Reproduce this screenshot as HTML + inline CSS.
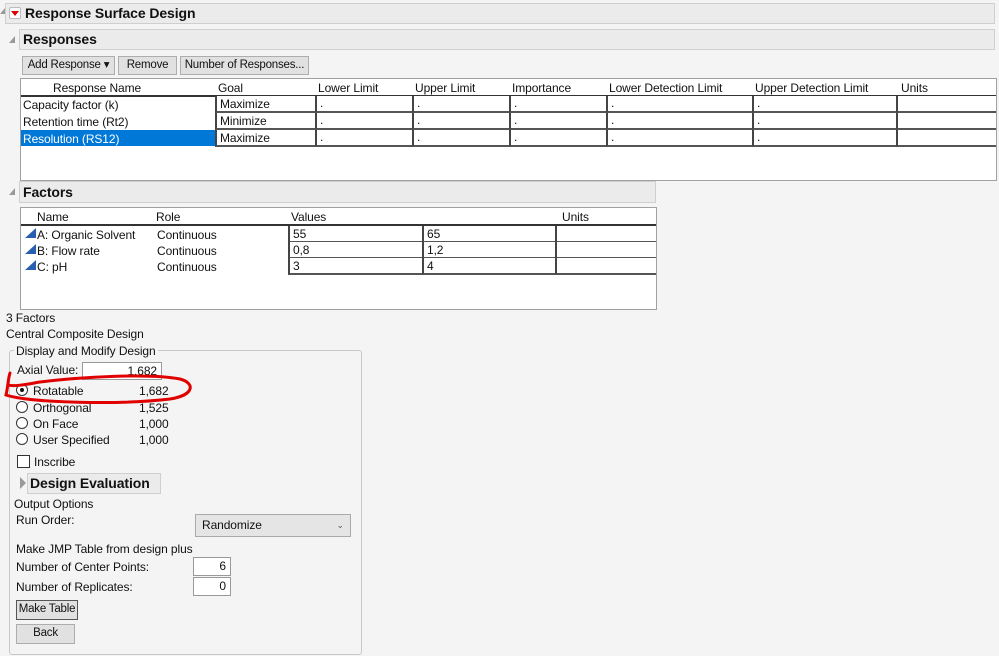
<!DOCTYPE html>
<html><head><meta charset="utf-8"><style>
*{box-sizing:border-box;margin:0;padding:0}
body{width:999px;height:656px;background:#f4f4f4;font-family:"Liberation Sans",sans-serif;font-size:12px;color:#111;position:relative;overflow:hidden;letter-spacing:-0.1px}
.a{position:absolute;white-space:nowrap}
.bar{position:absolute;background:#ebebeb;border:1px solid #cfcfcf}
.bt{font-weight:bold;font-size:14px}
.btn{position:absolute;background:#e1e1e1;border:1px solid #adadad;text-align:center;line-height:17px;white-space:nowrap;overflow:hidden;font-size:11.5px;letter-spacing:-0.2px}
.box{position:absolute;background:#fff;border:1px solid #a0a0a0}
.cell{position:absolute;background:#fff;border-left:2px solid #444;border-bottom:2px solid #555;line-height:14px;padding-left:3px}
.in{position:absolute;background:#fff;border:1px solid #999;text-align:right;padding-right:4px;line-height:16px}
.rad{position:absolute;width:12px;height:12px;border:1px solid #333;border-radius:50%;background:#fff}
.tri{position:absolute;width:0;height:0}
</style></head><body>
<div class="tri" style="left:0;top:8px;border-left:5px solid transparent;border-bottom:6px solid #999"></div>
<div class="bar" style="left:5px;top:3px;width:990px;height:21px"></div>
<div class="a" style="left:9px;top:7px;width:12px;height:12px;background:#fff;border:1px solid #bbb;border-radius:2px"></div>
<div class="tri" style="left:11px;top:11px;border-left:4px solid transparent;border-right:4px solid transparent;border-top:5px solid #d00"></div>
<div class="a bt" style="left:25px;top:5px">Response Surface Design</div>

<div class="tri" style="left:9px;top:36px;border-left:6px solid transparent;border-bottom:7px solid #999"></div>
<div class="bar" style="left:19px;top:29px;width:976px;height:21px"></div>
<div class="a bt" style="left:23px;top:31px">Responses</div>

<div class="btn" style="left:22px;top:56px;width:93px;height:19px">Add Response ▾</div>
<div class="btn" style="left:118px;top:56px;width:59px;height:19px">Remove</div>
<div class="btn" style="left:180px;top:56px;width:129px;height:19px">Number of Responses...</div>

<div class="box" style="left:20px;top:78px;width:977px;height:103px"></div>
<div class="a" style="left:53px;top:81px">Response Name</div>
<div class="a" style="left:218px;top:81px">Goal</div>
<div class="a" style="left:318px;top:81px">Lower Limit</div>
<div class="a" style="left:415px;top:81px">Upper Limit</div>
<div class="a" style="left:512px;top:81px">Importance</div>
<div class="a" style="left:609px;top:81px">Lower Detection Limit</div>
<div class="a" style="left:755px;top:81px">Upper Detection Limit</div>
<div class="a" style="left:901px;top:81px">Units</div>
<div class="a" style="left:21px;top:95px;width:975px;height:2px;background:#333"></div>
<div class="a" style="left:21px;top:130px;width:195px;height:16px;background:#0078d7"></div>
<div class="a" style="left:23px;top:98px">Capacity factor (k)</div>
<div class="a" style="left:23px;top:115px">Retention time (Rt2)</div>
<div class="a" style="left:23px;top:132px;color:#fff">Resolution (RS12)</div>
<div class="cell" style="left:215px;top:96px;width:100px;height:17px;padding-top:1px">Maximize</div>
<div class="cell" style="left:215px;top:113px;width:100px;height:17px;padding-top:1px">Minimize</div>
<div class="cell" style="left:215px;top:130px;width:100px;height:17px;padding-top:1px">Maximize</div>
<div class="cell" style="left:315px;top:96px;width:97px;height:17px">.</div>
<div class="cell" style="left:315px;top:113px;width:97px;height:17px">.</div>
<div class="cell" style="left:315px;top:130px;width:97px;height:17px">.</div>
<div class="cell" style="left:412px;top:96px;width:97px;height:17px">.</div>
<div class="cell" style="left:412px;top:113px;width:97px;height:17px">.</div>
<div class="cell" style="left:412px;top:130px;width:97px;height:17px">.</div>
<div class="cell" style="left:509px;top:96px;width:97px;height:17px">.</div>
<div class="cell" style="left:509px;top:113px;width:97px;height:17px">.</div>
<div class="cell" style="left:509px;top:130px;width:97px;height:17px">.</div>
<div class="cell" style="left:606px;top:96px;width:146px;height:17px">.</div>
<div class="cell" style="left:606px;top:113px;width:146px;height:17px">.</div>
<div class="cell" style="left:606px;top:130px;width:146px;height:17px">.</div>
<div class="cell" style="left:752px;top:96px;width:145px;height:17px">.</div>
<div class="cell" style="left:752px;top:113px;width:145px;height:17px">.</div>
<div class="cell" style="left:752px;top:130px;width:145px;height:17px">.</div>
<div class="cell" style="left:896px;top:96px;width:100px;height:17px"></div>
<div class="cell" style="left:896px;top:113px;width:100px;height:17px"></div>
<div class="cell" style="left:896px;top:130px;width:100px;height:17px"></div>

<div class="tri" style="left:9px;top:188px;border-left:6px solid transparent;border-bottom:7px solid #999"></div>
<div class="bar" style="left:19px;top:181px;width:637px;height:22px"></div>
<div class="a bt" style="left:23px;top:184px">Factors</div>

<div class="box" style="left:20px;top:207px;width:637px;height:103px"></div>
<div class="a" style="left:37px;top:210px">Name</div>
<div class="a" style="left:156px;top:210px">Role</div>
<div class="a" style="left:291px;top:210px">Values</div>
<div class="a" style="left:562px;top:210px">Units</div>
<div class="a" style="left:21px;top:224px;width:635px;height:2px;background:#333"></div>
<svg class="a" style="left:25px;top:228px" width="12" height="44"><path d="M0 10L11 0V10Z" fill="#2a5fb0"/><path d="M0 26L11 16V26Z" fill="#2a5fb0"/><path d="M0 42L11 32V42Z" fill="#2a5fb0"/></svg>
<div class="a" style="left:37px;top:228px">A: Organic Solvent</div>
<div class="a" style="left:37px;top:244px">B: Flow rate</div>
<div class="a" style="left:37px;top:260px">C: pH</div>
<div class="a" style="left:157px;top:228px">Continuous</div>
<div class="a" style="left:157px;top:244px">Continuous</div>
<div class="a" style="left:157px;top:260px">Continuous</div>
<div class="cell" style="left:288px;top:226px;width:134px;height:17px;padding-top:1px">55</div>
<div class="cell" style="left:288px;top:242px;width:134px;height:17px;padding-top:1px">0,8</div>
<div class="cell" style="left:288px;top:258px;width:134px;height:17px;padding-top:1px">3</div>
<div class="cell" style="left:422px;top:226px;width:134px;height:17px;padding-top:1px">65</div>
<div class="cell" style="left:422px;top:242px;width:134px;height:17px;padding-top:1px">1,2</div>
<div class="cell" style="left:422px;top:258px;width:134px;height:17px;padding-top:1px">4</div>
<div class="cell" style="left:555px;top:226px;width:101px;height:17px"></div>
<div class="cell" style="left:555px;top:242px;width:101px;height:17px"></div>
<div class="cell" style="left:555px;top:258px;width:101px;height:17px"></div>

<div class="a" style="left:6px;top:311px">3 Factors</div>
<div class="a" style="left:6px;top:327px">Central Composite Design</div>

<div class="a" style="left:9px;top:350px;width:353px;height:305px;border:1px solid #c8c8c8;border-radius:3px"></div>
<div class="a" style="left:14px;top:344px;background:#f4f4f4;padding:0 2px">Display and Modify Design</div>
<div class="a" style="left:17px;top:363px">Axial Value:</div>
<div class="in" style="left:82px;top:362px;width:80px;height:18px">1,682</div>
<div class="rad" style="left:16px;top:384px"><div style="position:absolute;left:3px;top:3px;width:4px;height:4px;border-radius:50%;background:#111"></div></div>
<div class="rad" style="left:16px;top:401px"></div>
<div class="rad" style="left:16px;top:417px"></div>
<div class="rad" style="left:16px;top:433px"></div>
<div class="a" style="left:33px;top:384px">Rotatable</div>
<div class="a" style="left:33px;top:401px">Orthogonal</div>
<div class="a" style="left:33px;top:417px">On Face</div>
<div class="a" style="left:33px;top:433px">User Specified</div>
<div class="a" style="left:139px;top:384px">1,682</div>
<div class="a" style="left:139px;top:401px">1,525</div>
<div class="a" style="left:139px;top:417px">1,000</div>
<div class="a" style="left:139px;top:433px">1,000</div>
<div class="a" style="left:17px;top:455px;width:13px;height:13px;border:1px solid #333;background:#fff"></div>
<div class="a" style="left:34px;top:455px">Inscribe</div>
<div class="tri" style="left:20px;top:477px;border-top:6px solid transparent;border-bottom:6px solid transparent;border-left:6px solid #999"></div>
<div class="bar" style="left:27px;top:473px;width:134px;height:21px"></div>
<div class="a bt" style="left:30px;top:475px">Design Evaluation</div>
<div class="a" style="left:14px;top:497px">Output Options</div>
<div class="a" style="left:16px;top:513px">Run Order:</div>
<div class="a" style="left:195px;top:514px;width:156px;height:23px;background:#e5e5e5;border:1px solid #aaa;line-height:21px;padding-left:6px">Randomize<span style="position:absolute;right:6px;font-size:9px;color:#555">⌄</span></div>
<div class="a" style="left:16px;top:542px">Make JMP Table from design plus</div>
<div class="a" style="left:16px;top:560px">Number of Center Points:</div>
<div class="a" style="left:16px;top:580px">Number of Replicates:</div>
<div class="in" style="left:193px;top:557px;width:38px;height:19px;line-height:17px">6</div>
<div class="in" style="left:193px;top:577px;width:38px;height:19px;line-height:17px">0</div>
<div class="btn" style="left:16px;top:600px;width:62px;height:20px;border-color:#555">Make Table</div>
<div class="btn" style="left:16px;top:624px;width:59px;height:20px">Back</div>

<svg class="a" style="left:0;top:365px" width="200" height="45"><path d="M10 8 C8 14 8 22 6 30 C30 38 120 40 170 34 C195 30 195 18 180 14 C150 8 80 12 40 17 C28 19 14 22 8 20" fill="none" stroke="#e00000" stroke-width="3" stroke-linecap="round"/></svg>
</body></html>
